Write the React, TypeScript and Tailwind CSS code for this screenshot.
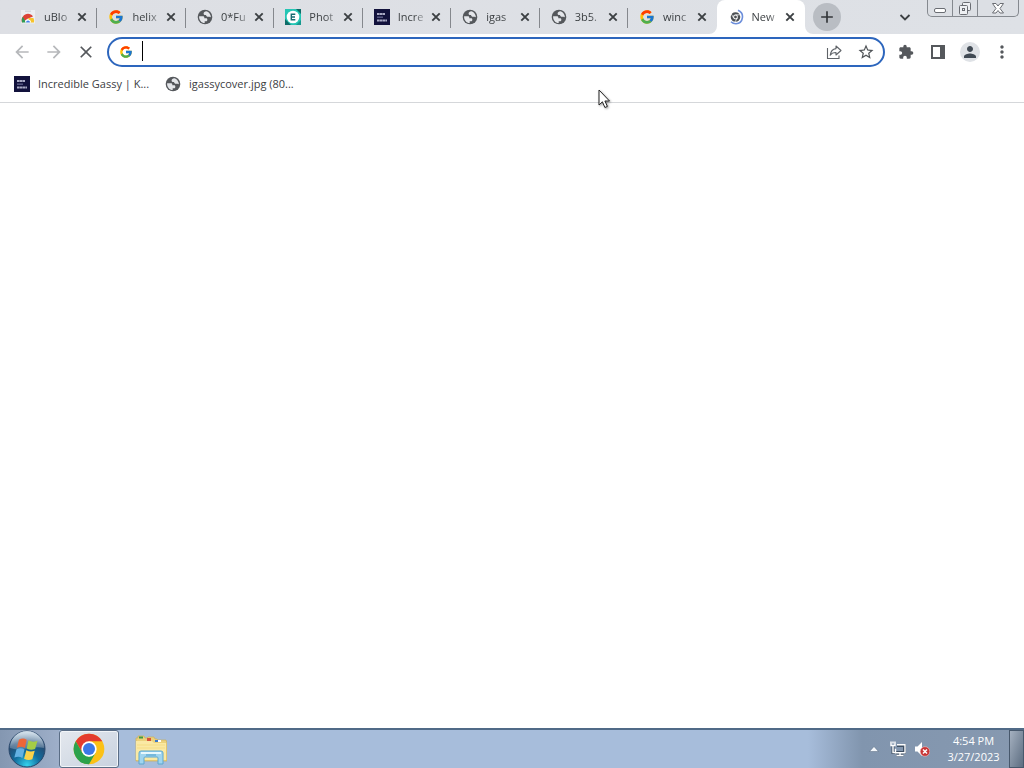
import React from 'react';
import { FcGoogle } from 'react-icons/fc';
import { MdExtension, MdPerson, MdStarBorder, MdArrowBack, MdArrowForward, MdMoreVert, MdClose, MdAdd } from 'react-icons/md';

type IconName = 'store' | 'google' | 'globe' | 'ezgif' | 'meme' | 'loading';

interface Tab {
  id: number;
  icon: IconName;
  title: string;
}

const TABS: Tab[] = [
  { id: 1, icon: 'store', title: 'uBlo' },
  { id: 2, icon: 'google', title: 'helix' },
  { id: 3, icon: 'globe', title: '0*Fu' },
  { id: 4, icon: 'ezgif', title: 'Phot' },
  { id: 5, icon: 'meme', title: 'Incre' },
  { id: 6, icon: 'globe', title: 'igas' },
  { id: 7, icon: 'globe', title: '3b5.' },
  { id: 8, icon: 'google', title: 'winc' },
  { id: 9, icon: 'loading', title: 'New' },
];

const ACTIVE_TAB = 9;

function GlobeIcon() {
  return (
    <svg className="w-4 h-4 shrink-0" viewBox="0 0 16 16">
      <circle cx="8" cy="8" r="7.3" fill="#55585c" />
      <path d="M2.100 7.200h3.600c1 0 1.600.5 1.600 1.400v.6h1.800c.7 0 1.200.4 1.200 1.100v.6c0 .8-.6 1.300-1.300 1.300H7.700v1.900C4.400 13.900 1.900 11 2.100 7.200z" fill="#e4e6ea" />
      <path d="M9.400 2.200C7.700 2.400 6.600 3.400 6.600 4.400c0 1 .8 1.600 1.700 1.600h.7c.2 1.100.9 1.800 2.100 1.800h1.300c.6 0 .9.400 1.500.4-.1-2.900-1.900-5.400-4.500-6z" fill="#e4e6ea" />
    </svg>
  );
}

function ChromeMark({ className }: { className: string }) {
  return (
    <svg className={className} viewBox="0 0 48 48">
      <circle cx="24" cy="24" r="23" fill="#fbc116" />
      <path d="M4.080 12.500A23 23 0 0 1 43.920 12.500H24L14.040 29.750z" fill="#e33b2e" />
      <path d="M4.080 12.500A23 23 0 0 0 24 47L33.960 29.750L24 35.500L14.040 29.750z" fill="#2ba24c" />
      <circle cx="24" cy="24" r="11.500" fill="#fff" />
      <circle cx="24" cy="24" r="9" fill="#3b78e7" />
    </svg>
  );
}

function StoreIcon() {
  return (
    <svg className="w-4 h-4 shrink-0" viewBox="0 0 16 16">
      <path d="M1 1h14v13.500H1z" fill="#eceef1" />
      <path d="M5 1.500h6v1.500H5z" fill="#d5d8dc" />
      <path d="M2 13.500a6 6 0 0 1 1-6 6 6 0 0 1 10 0L8 9.500z" fill="#dc4437" />
      <path d="M2 13.500a6 6 0 0 1 .8-5.700l3.400 5.700z" fill="#2f9b52" />
      <path d="M14 13.500a6 6 0 0 0-.6-4.500H8l2 4.500z" fill="#f7c32b" />
      <path d="M5 13.500a3 3 0 0 1 6 0z" fill="#fff" />
      <path d="M6 13.500a2 2 0 0 1 4 0z" fill="#4580e8" />
    </svg>
  );
}

function EzgifIcon() {
  return (
    <svg className="w-4 h-4 shrink-0" viewBox="0 0 16 16">
      <path d="M0 0h16v16H0z" fill="#25c5b4" />
      <path d="M0 10v6h6zM11 0h5v5z" fill="#0e6c68" />
      <path d="M16 11v5h-5z" fill="#17998f" />
      <circle cx="8" cy="8" r="6.3" fill="#fff" />
      <path d="M10.300 5.300H6.300v5.400h4M6.300 8h3.700" fill="none" stroke="#186b70" strokeWidth="1.400" />
    </svg>
  );
}

function MemeIcon() {
  return (
    <svg className="w-4 h-4 shrink-0" viewBox="0 0 16 16">
      <path d="M0 0h16v16H0z" fill="#12123c" />
      <path d="M3 5h8M3 11.500h10" stroke="#a9aac4" strokeWidth="2" strokeDasharray="2.500 .3" />
      <path d="M3 8.200h6" stroke="#585982" strokeWidth="1.500" />
    </svg>
  );
}

function LoadingIcon() {
  return (
    <svg className="w-4 h-4 shrink-0" viewBox="0 0 16 16" fill="none">
      <circle cx="7.500" cy="8" r="3.600" stroke="#4c5054" strokeWidth="2.400" />
      <circle cx="7.500" cy="8" r="1.400" fill="#4c5054" />
      <path d="M7.500 5.800h5M5.600 9L3.300 5M9.400 9l-2.500 4" stroke="#fff" strokeWidth=".7" />
      <path d="M10 1.300a7 7 0 0 1-2 13.500 7 7 0 0 1-5-2" stroke="#6d8fdb" strokeWidth="1.600" />
    </svg>
  );
}

function SiteIcon({ name }: { name: IconName }) {
  switch (name) {
    case 'store': return <StoreIcon />;
    case 'google': return <FcGoogle className="w-4 h-4 shrink-0" />;
    case 'globe': return <GlobeIcon />;
    case 'ezgif': return <EzgifIcon />;
    case 'meme': return <MemeIcon />;
    default: return <LoadingIcon />;
  }
}

function TabItem({ tab }: { tab: Tab }) {
  const isActive = tab.id === ACTIVE_TAB;
  const showDivider = !isActive && tab.id !== ACTIVE_TAB - 1;

  return (
    <div
      role="tab"
      aria-selected={isActive}
      className={`relative flex-1 min-w-0 h-[34px] flex items-center pl-[11px] pr-2 ${isActive ? 'bg-white rounded-t-lg' : ''}`}
    >
      <SiteIcon name={tab.icon} />
      <span className="ml-2 flex-1 min-w-0 overflow-hidden whitespace-nowrap text-[11px] leading-4 text-[#3c4043] mask-r-from-50%">
        {tab.title}
      </span>
      <button aria-label={`Close ${tab.title}`} className="w-[14px] h-[14px] shrink-0 flex items-center justify-center text-[#3c4043]">
        <svg className="w-[14px] h-[14px]" viewBox="0 0 14 14" stroke="currentColor" strokeWidth="1.900">
          <path d="M3.300 3.300l7.400 7.400M10.700 3.300l-7.400 7.400" />
        </svg>
      </button>
      {showDivider && <span className="absolute right-0 top-2 w-px h-5 bg-[#85888d]" />}
      {isActive && (
        <>
          <svg className="absolute -left-2 bottom-0 w-2 h-2" viewBox="0 0 8 8"><path d="M8 0v8H0a8 8 0 0 0 8-8z" fill="#fff" /></svg>
          <svg className="absolute -right-2 bottom-0 w-2 h-2" viewBox="0 0 8 8"><path d="M0 0v8h8a8 8 0 0 1-8-8z" fill="#fff" /></svg>
        </>
      )}
    </div>
  );
}

function WindowControls() {
  return (
    <div className="h-[17px] w-[92px] flex rounded-b-[5px] border border-t-0 border-[#85898f] bg-[#dcdfe4] text-[#6a6d73]">
      <button aria-label="Minimize" className="w-[25px] border-r border-[#85898f] flex justify-center">
        <svg className="w-4 h-4" viewBox="0 0 16 16" fill="#fff" stroke="currentColor"><rect x="2.500" y="8.500" width="11" height="4" rx="1.500" /></svg>
      </button>
      <button aria-label="Restore" className="w-[25px] border-r border-[#85898f] flex justify-center">
        <svg className="w-4 h-4" viewBox="0 0 16 16" fill="#eef0f3" stroke="currentColor">
          <rect x="5.500" y="2.500" width="8" height="8" rx="1" />
          <rect x="2.500" y="5.500" width="8" height="9" rx="1" />
          <rect x="5.500" y="8.500" width="2" height="2" />
        </svg>
      </button>
      <button aria-label="Close window" className="flex-1 flex justify-center">
        <svg className="w-4 h-4" viewBox="0 0 16 16" fill="#fff" stroke="currentColor" strokeLinejoin="round">
          <path d="M2.500 3.500h3.500l2 2.500 2-2.500h3.500L10 8.500l3.500 4.500H10L8 10.500 6 13H2.500L6 8.500z" />
        </svg>
      </button>
    </div>
  );
}

function TabStrip() {
  return (
    <header className="h-[34px] flex items-end bg-linear-to-r from-[#dddfe4] to-[#dee1e6]">
      <div role="tablist" className="flex-1 min-w-0 flex pl-[9px]">
        {TABS.map((tab) => <TabItem key={tab.id} tab={tab} />)}
      </div>
      <div className="h-full w-[219px] shrink-0 flex pl-2">
        <button aria-label="New tab" className="mt-[3px] w-7 h-7 rounded-full bg-[#b9bdc3] flex items-center justify-center text-[#33363a]">
          <MdAdd className="w-5 h-5" />
        </button>
        <button aria-label="Search tabs" className="ml-auto mr-[14px] w-4 flex items-center justify-center text-[#3c4043]">
          <svg className="w-3 h-3" viewBox="0 0 12 12" fill="none" stroke="currentColor" strokeWidth="1.800"><path d="M1.500 4L6 8.500 10.500 4" /></svg>
        </button>
        <WindowControls />
        <span className="w-[5px]" />
      </div>
    </header>
  );
}

function Toolbar() {
  return (
    <div className="h-9 flex items-center px-3">
      <div className="flex items-center gap-3">
        <button aria-label="Back" className="w-5 text-[#b6b8bb]"><MdArrowBack className="w-5 h-5" /></button>
        <button aria-label="Forward" className="w-5 text-[#b6b8bb]"><MdArrowForward className="w-5 h-5" /></button>
        <button aria-label="Stop loading" className="w-5 text-[#55585c]"><MdClose className="w-5 h-5" /></button>
      </div>
      <div className="ml-[11px] flex-1 min-w-0 h-[30px] rounded-full border-2 border-[#2d66bd] bg-white flex items-center pl-[10px] pr-2">
        <FcGoogle className="w-[14px] h-[14px] shrink-0" />
        <span className="ml-[9px] w-px h-5 bg-black -mt-[2px]" />
        <input aria-label="Address and search bar" className="flex-1 min-w-0 h-5 text-[13px] outline-none" />
        <button aria-label="Share this page" className="text-[#5f6368]">
          <svg className="w-4 h-4" viewBox="0 0 16 16" fill="none" stroke="currentColor" strokeWidth="1.100">
            <path d="M1.500 4v10.500h11.500V11.500" />
            <path d="M10 2l5 4.500-5 4.500V8.500c-2.500 0-4.500.7-5.800 2.700C4.700 7.500 6.500 5 10 4.600z" strokeLinejoin="round" />
          </svg>
        </button>
        <button aria-label="Bookmark this page" className="ml-[15px] text-[#4f5357]"><MdStarBorder className="w-[18px] h-[18px]" /></button>
      </div>
      <div className="ml-[11px] flex items-center gap-3 text-[#55585c]">
        <button aria-label="Extensions" className="w-5 flex justify-center"><MdExtension className="w-4 h-4" /></button>
        <button aria-label="Side panel" className="w-5 flex justify-center">
          <svg className="w-4 h-4" viewBox="0 0 16 16"><path d="M1 1h14v14H1zM3 3v10h7V3z" fill="currentColor" fillRule="evenodd" /></svg>
        </button>
        <button aria-label="Profile" className="w-5 h-5 rounded-full bg-[#dfe2e6] flex items-center justify-center text-[#414a54]"><MdPerson className="w-[18px] h-[18px]" /></button>
        <button aria-label="Menu" className="w-5 flex justify-center"><MdMoreVert className="w-5 h-5" /></button>
      </div>
    </div>
  );
}

function BookmarksBar() {
  return (
    <nav className="h-[33px] flex items-center gap-4 pl-[14px] pb-1 border-b border-[#d5d7da] text-[11px] leading-4 text-[#3c4043]">
      <a href="#meme" className="flex items-center gap-2"><MemeIcon />Incredible Gassy | K...</a>
      <a href="#cover" className="flex items-center gap-2"><GlobeIcon />igassycover.jpg (80...</a>
    </nav>
  );
}

function StartOrb() {
  return (
    <svg className="w-[38px] h-[38px]" viewBox="0 0 38 38">
      <defs>
        <radialGradient id="orb" cx=".5" cy=".95" r=".9">
          <stop offset="0" stopColor="#35d3ed" />
          <stop offset=".4" stopColor="#116e9f" />
          <stop offset=".75" stopColor="#254c73" />
          <stop offset="1" stopColor="#93aec4" />
        </radialGradient>
        <linearGradient id="shine" x1="0" y1="0" x2="0" y2="1">
          <stop offset="0" stopColor="#e2edf5" stopOpacity=".85" />
          <stop offset="1" stopColor="#a7bacd" stopOpacity=".35" />
        </linearGradient>
      </defs>
      <circle cx="19" cy="19" r="18" fill="url(#orb)" stroke="#29476a" />
      <path d="M2 18a17 17 0 0 1 34 0c-11-3-23 4-34 0z" fill="url(#shine)" />
      <g transform="translate(-3.500 -3.500) scale(1.200)">
        <path d="M12 11c2.500-1.300 4.500-1.200 6.500 0L17 18c-2-1.300-4-1.400-6.700-.2z" fill="#ec6738" />
        <path d="M20 11.500c2.300 1.400 5 1.500 7.500.3l-2 7c-2.300 1-4.700.9-7-.4z" fill="#a5cd46" />
        <path d="M10 19c2.500-1.200 4.600-1 6.700.2l-1.800 7c-2-1.300-4.200-1.400-6.700-.3z" fill="#63b1e3" />
        <path d="M18.200 19.800c2.300 1.300 4.700 1.400 7 .4l-2 7c-2.300 1-4.600.8-6.900-.4z" fill="#fbd24a" />
      </g>
    </svg>
  );
}

function FolderIcon() {
  return (
    <svg className="w-8 h-8" viewBox="0 0 32 32">
      <path d="M1 5h2V3h6l1 2h2l1-1h6l1 2h2l1 1h8l1 3v18H1z" fill="#ecd27c" stroke="#cdb05a" strokeWidth=".7" />
      <path d="M4 3.500h4v2H4z" fill="#3f9a45" />
      <path d="M12 5h4v3h-4z" fill="#d9523a" />
      <path d="M20 7h6v2h-6z" fill="#fff" />
      <path d="M20 7h3v2h-3z" fill="#3c79c9" />
      <path d="M1 8h16l2 2h12v17H1z" fill="#fae9a4" />
      <path d="M2 12h28M2 15h28" stroke="#f5dc83" />
      <path d="M4 20q0-2 2-2h20q2 0 2 2v11h-5v-6q0-1-1-1H10q-1 0-1 1v6H4z" fill="#a0d5ef" stroke="#5ca7cf" />
      <path d="M6 20h20" stroke="#e7f8fd" strokeWidth="2" />
      <path d="M11 22h10" stroke="#4c9cc8" />
    </svg>
  );
}

function Taskbar() {
  return (
    <footer className="h-10 shrink-0 flex border-t-2 border-[#506a87] bg-[#a7bddb] text-white">
      <div className="flex items-center w-[59px] bg-linear-to-r from-[#8497b1] to-[#9eafc9] pl-2">
        <button aria-label="Start"><StartOrb /></button>
      </div>
      <button aria-label="Google Chrome" className="w-[60px] h-[38px] rounded-[3px] border border-[#5a6d85] bg-linear-to-br from-[#e4e8ee] to-[#c8d2df] shadow-[inset_0_0_0_1px_#f2f5f8] flex items-center justify-center">
        <ChromeMark className="w-8 h-8" />
      </button>
      <button aria-label="Windows Explorer" className="w-16 flex items-center justify-center"><FolderIcon /></button>
      <div className="ml-auto w-[216px] flex items-center bg-linear-to-r from-[#a7bddb] via-[#8195ae] via-25% to-[#8799b0]">
        <button aria-label="Show hidden icons" className="ml-[58px] w-4 flex justify-center">
          <svg className="w-[10px] h-[6px]" viewBox="0 0 10 6"><path d="M5 .5l4.500 5h-9z" fill="#f3f7fb" stroke="#57697f" strokeWidth=".5" /></svg>
        </button>
        <svg className="ml-2 w-4 h-4" viewBox="0 0 16 16" fill="none" stroke="#3f5064" strokeWidth="3">
          <path d="M7 4.500h7.500v7H6M6.500 14h7M3 5v6.500h3" />
          <g stroke="#fff" strokeWidth="1.400">
            <path d="M7 3.700h8v8H5.500v-4M10 12v2M6.500 14.500h7" />
            <path d="M1 .5v4h4v-4M3 .5v2M3 5v6.500h3" />
          </g>
        </svg>
        <svg className="ml-2 w-4 h-4" viewBox="0 0 16 16">
          <path d="M1 5.500h2.500L8 1v14l-4.500-4.500H1z" fill="#fff" />
          <circle cx="11" cy="10.500" r="4.800" fill="#c83535" stroke="#efc4c4" strokeWidth=".6" />
          <path d="M9 8.500l4 4M13 8.500l-4 4" stroke="#fff" strokeWidth="1.500" />
        </svg>
        <button className="flex-1 pl-2 text-center text-[11px] leading-4">
          <span className="block">4:54 PM</span>
          <span className="block">3/27/2023</span>
        </button>
        <button aria-label="Show desktop" className="w-[15px] h-full border border-[#47586c] bg-linear-to-br from-[#a5b1c0] to-[#5d6d81]" />
      </div>
    </footer>
  );
}

export default function App() {
  return (
    <div className="min-h-screen flex flex-col bg-white font-['Open_Sans',sans-serif] cursor-default">
      <TabStrip />
      <Toolbar />
      <BookmarksBar />
      <main className="flex-1" />
      <Taskbar />
      <svg className="absolute left-[598px] top-[89px] w-[14px] h-[21px] drop-shadow-[1px_1px_1px_#0006]" viewBox="0 0 14 21">
        <path d="M1 1v15l3.400-3.200 2.500 5.700 2.500-1.100-2.500-5.400h4.600z" fill="#fff" stroke="#222" />
      </svg>
    </div>
  );
}
